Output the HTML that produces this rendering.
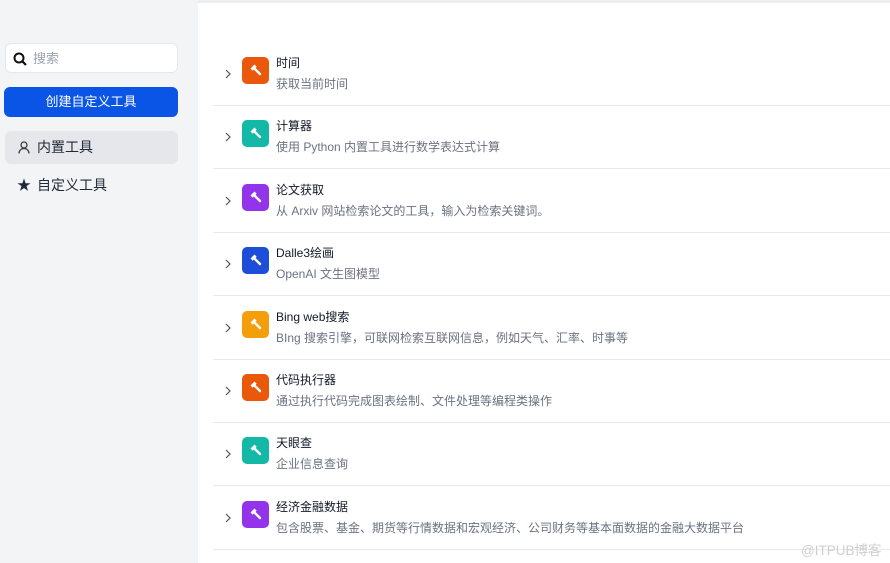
<!DOCTYPE html>
<html><head><meta charset="utf-8"><style>
*{margin:0;padding:0;box-sizing:border-box}
body{width:890px;height:563px;overflow:hidden;background:#fff;font-family:"Liberation Sans","Noto Sans CJK SC",sans-serif;position:relative}
.side{position:absolute;left:0;top:0;width:198px;height:563px;background:#f3f4f6}
.topline{position:absolute;left:198px;top:0;width:692px;height:3px;background:#eceef1}
.search{position:absolute;left:5px;top:43px;width:173px;height:30px;background:#fff;border:1px solid #e5e7eb;border-radius:6px;font-size:13px;color:#9ca3af;line-height:30px;padding-left:27px}
.btn{position:absolute;left:4px;top:87px;width:174px;height:30px;background:#0a55e6;border-radius:6px;color:#fff;font-size:13px;text-align:center;line-height:30px}
.nav{position:absolute;left:5px;width:173px;height:33px;border-radius:6px;font-size:14px;color:#1f2937;line-height:33px;padding-left:32px}
.row{position:absolute;left:213px;width:677px;height:64px;border-bottom:1px solid #e8e9ec}
.chev{position:absolute;left:11px;top:26px}
.ic{position:absolute;left:29px;top:15px;width:27px;height:27px;border-radius:5px}
.t{position:absolute;left:63px;top:12px;font-size:12px;color:#111827}
.d{position:absolute;left:63px;top:33px;font-size:12px;color:#6b7280}
.wm{position:absolute;left:801px;top:539px;font-size:13.5px;color:#cfcfcf}
</style></head><body>
<div class="side"></div><div class="topline"></div>
<div class="search"><svg style="position:absolute;left:7px;top:8px" width="14" height="14" viewBox="0 0 14 14"><circle cx="6" cy="6" r="4.5" fill="none" stroke="#111" stroke-width="2"/><path d="M9.3 9.3L13 13" stroke="#111" stroke-width="2.2"/></svg>搜索</div>
<div class="btn">创建自定义工具</div>
<div class="nav" style="top:131px;background:#e5e7eb"><svg style="position:absolute;left:13px;top:10px" width="12" height="13" viewBox="0 0 12 13"><circle cx="6" cy="4" r="3" fill="none" stroke="#333" stroke-width="1.2"/><path d="M1 12.5c0-3 2.2-5 5-5s5 2 5 5" fill="none" stroke="#333" stroke-width="1.2"/></svg>内置工具</div>
<div class="nav" style="top:169px"><span style="position:absolute;left:12px;top:0;font-size:14px">★</span>自定义工具</div>

<div class="row" style="top:42px"><svg class="chev" width="8" height="12" viewBox="0 0 8 12"><path d="M2 2l4 4-4 4" fill="none" stroke="#555" stroke-width="1.2"/></svg><div class="ic" style="background:#ea580c"><svg width="27" height="27" viewBox="0 0 27 27"><path d="M8.5 11.5l4-4 2.2 2.2-4 4z" fill="#fff"/><path d="M12.8 11.8l5.2 5.2" stroke="#fff" stroke-width="2.4" stroke-linecap="round"/></svg></div><div class="t">时间</div><div class="d">获取当前时间</div></div>
<div class="row" style="top:105.4px"><svg class="chev" width="8" height="12" viewBox="0 0 8 12"><path d="M2 2l4 4-4 4" fill="none" stroke="#555" stroke-width="1.2"/></svg><div class="ic" style="background:#14b8a6"><svg width="27" height="27" viewBox="0 0 27 27"><path d="M8.5 11.5l4-4 2.2 2.2-4 4z" fill="#fff"/><path d="M12.8 11.8l5.2 5.2" stroke="#fff" stroke-width="2.4" stroke-linecap="round"/></svg></div><div class="t">计算器</div><div class="d">使用 Python 内置工具进行数学表达式计算</div></div>
<div class="row" style="top:168.8px"><svg class="chev" width="8" height="12" viewBox="0 0 8 12"><path d="M2 2l4 4-4 4" fill="none" stroke="#555" stroke-width="1.2"/></svg><div class="ic" style="background:#9333ea"><svg width="27" height="27" viewBox="0 0 27 27"><path d="M8.5 11.5l4-4 2.2 2.2-4 4z" fill="#fff"/><path d="M12.8 11.8l5.2 5.2" stroke="#fff" stroke-width="2.4" stroke-linecap="round"/></svg></div><div class="t">论文获取</div><div class="d">从 Arxiv 网站检索论文的工具，输入为检索关键词。</div></div>
<div class="row" style="top:232.2px"><svg class="chev" width="8" height="12" viewBox="0 0 8 12"><path d="M2 2l4 4-4 4" fill="none" stroke="#555" stroke-width="1.2"/></svg><div class="ic" style="background:#1d4ed8"><svg width="27" height="27" viewBox="0 0 27 27"><path d="M8.5 11.5l4-4 2.2 2.2-4 4z" fill="#fff"/><path d="M12.8 11.8l5.2 5.2" stroke="#fff" stroke-width="2.4" stroke-linecap="round"/></svg></div><div class="t">Dalle3绘画</div><div class="d">OpenAI 文生图模型</div></div>
<div class="row" style="top:295.6px"><svg class="chev" width="8" height="12" viewBox="0 0 8 12"><path d="M2 2l4 4-4 4" fill="none" stroke="#555" stroke-width="1.2"/></svg><div class="ic" style="background:#f59e0b"><svg width="27" height="27" viewBox="0 0 27 27"><path d="M8.5 11.5l4-4 2.2 2.2-4 4z" fill="#fff"/><path d="M12.8 11.8l5.2 5.2" stroke="#fff" stroke-width="2.4" stroke-linecap="round"/></svg></div><div class="t">Bing web搜索</div><div class="d">BIng 搜索引擎，可联网检索互联网信息，例如天气、汇率、时事等</div></div>
<div class="row" style="top:359px"><svg class="chev" width="8" height="12" viewBox="0 0 8 12"><path d="M2 2l4 4-4 4" fill="none" stroke="#555" stroke-width="1.2"/></svg><div class="ic" style="background:#ea580c"><svg width="27" height="27" viewBox="0 0 27 27"><path d="M8.5 11.5l4-4 2.2 2.2-4 4z" fill="#fff"/><path d="M12.8 11.8l5.2 5.2" stroke="#fff" stroke-width="2.4" stroke-linecap="round"/></svg></div><div class="t">代码执行器</div><div class="d">通过执行代码完成图表绘制、文件处理等编程类操作</div></div>
<div class="row" style="top:422.4px"><svg class="chev" width="8" height="12" viewBox="0 0 8 12"><path d="M2 2l4 4-4 4" fill="none" stroke="#555" stroke-width="1.2"/></svg><div class="ic" style="background:#14b8a6"><svg width="27" height="27" viewBox="0 0 27 27"><path d="M8.5 11.5l4-4 2.2 2.2-4 4z" fill="#fff"/><path d="M12.8 11.8l5.2 5.2" stroke="#fff" stroke-width="2.4" stroke-linecap="round"/></svg></div><div class="t">天眼查</div><div class="d">企业信息查询</div></div>
<div class="row" style="top:485.8px"><svg class="chev" width="8" height="12" viewBox="0 0 8 12"><path d="M2 2l4 4-4 4" fill="none" stroke="#555" stroke-width="1.2"/></svg><div class="ic" style="background:#9333ea"><svg width="27" height="27" viewBox="0 0 27 27"><path d="M8.5 11.5l4-4 2.2 2.2-4 4z" fill="#fff"/><path d="M12.8 11.8l5.2 5.2" stroke="#fff" stroke-width="2.4" stroke-linecap="round"/></svg></div><div class="t">经济金融数据</div><div class="d">包含股票、基金、期货等行情数据和宏观经济、公司财务等基本面数据的金融大数据平台</div></div>

<div class="wm">@ITPUB博客</div>
</body></html>
